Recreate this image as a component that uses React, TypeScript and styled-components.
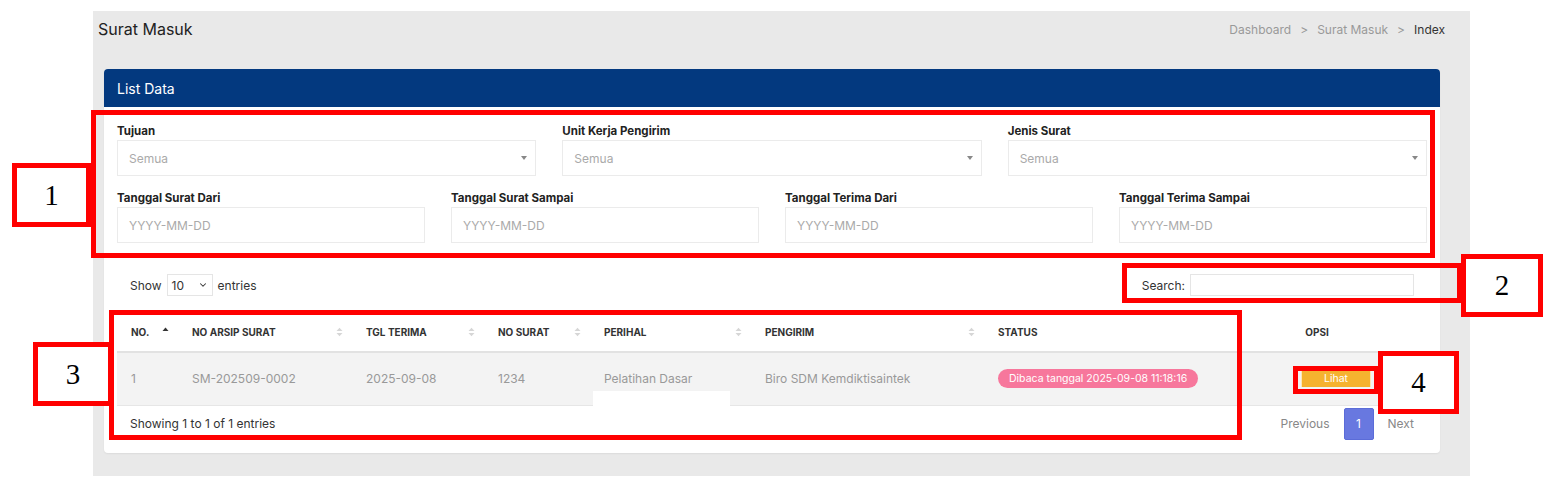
import styled, { createGlobalStyle } from 'styled-components';
import { ChevronDown } from 'lucide-react';

const GlobalStyle = createGlobalStyle`
  * { box-sizing: border-box; }
  body {
    margin: 0;
    background: #fff;
    font-family: Inter, "Noto Sans", sans-serif;
    color: #333;
  }
`;

const Page = styled.div`
  position: relative;
  width: 1553px;
  height: 479px;
  padding: 11px 0 0 93px;
  overflow: hidden;
`;

const Panel = styled.div`
  width: 1377px;
  height: 465px;
  background: #e9e9e9;
  padding: 0 30px 0 11px;
`;

const TopBar = styled.div`
  height: 36px;
  display: flex;
  align-items: center;
  justify-content: space-between;
  margin-left: -6px;
`;

const PageTitle = styled.h2`
  margin: 0;
  font-size: 16px;
  font-weight: 400;
  color: #222;
`;

const Crumbs = styled.div`
  display: flex;
  align-items: center;
  gap: 9px;
  font-size: 12px;
  color: #999;
  margin-right: -5px;
`;

const Crumb = styled.span<{ $active?: boolean }>`
  color: ${(p) => (p.$active ? '#333' : '#999')};
`;

const Card = styled.div`
  margin-top: 22px;
  background: #fff;
  border-radius: 4px;
  overflow: hidden;
  box-shadow: 0 1px 2px rgba(0, 0, 0, 0.06);
`;

const CardHeader = styled.div`
  height: 38px;
  background: #03397f;
  color: #fff;
  display: flex;
  align-items: center;
  padding-left: 13px;
  font-size: 14px;
`;

const CardBody = styled.div`
  padding: 16px 13px 13px;
`;

const FilterGrid = styled.div<{ $cols: number }>`
  display: grid;
  grid-template-columns: repeat(${(p) => p.$cols}, 1fr);
  column-gap: 26px;
  & + & { margin-top: 14px; }
`;

const Field = styled.div`
  display: flex;
  flex-direction: column;
`;

const Label = styled.label`
  font-size: 11.5px;
  font-weight: 700;
  color: #222;
  line-height: 17px;
`;

const Control = styled.div`
  height: 36px;
  border: 1px solid #ebebeb;
  display: flex;
  align-items: center;
  justify-content: space-between;
  padding: 0 8px 0 11px;
  font-size: 12px;
  color: #aaa;
`;

const Caret = styled.span`
  width: 0;
  height: 0;
  border-left: 3.5px solid transparent;
  border-right: 3.5px solid transparent;
  border-top: 4px solid #888;
`;

const Controls = styled.div`
  margin-top: 31px;
  padding: 0 13px;
  display: flex;
  justify-content: space-between;
  align-items: center;
  font-size: 12px;
  color: #333;
`;

const Inline = styled.div`
  display: flex;
  align-items: center;
  gap: 5px;
`;

const LengthSelect = styled.div`
  width: 46px;
  height: 22px;
  border: 1px solid #e5e5e5;
  display: flex;
  align-items: center;
  justify-content: space-between;
  padding: 0 4px;
  font-size: 12px;
`;

const SearchInput = styled.div`
  width: 224px;
  height: 22px;
  border: 1px solid #e5e5e5;
`;

const Table = styled.table`
  margin-top: 16px;
  width: 100%;
  border-collapse: collapse;
  table-layout: fixed;
`;

const Th = styled.th<{ $center?: boolean }>`
  height: 40px;
  padding: 0 0 0 14px;
  text-align: ${(p) => (p.$center ? 'center' : 'left')};
  font-size: 10px;
  font-weight: 700;
  color: #333;
  border-bottom: 2px solid #e2e2e2;
  position: relative;
`;

const SortIcon = styled.svg`
  position: absolute;
  right: 9px;
  top: 50%;
  transform: translateY(-50%);
`;

const Tr = styled.tr`
  background: #f3f3f3;
`;

const Td = styled.td<{ $pad?: number }>`
  height: 53px;
  padding: 0 0 0 ${(p) => p.$pad ?? 14}px;
  font-size: 12px;
  color: #999;
  border-bottom: 1px solid #e6e6e6;
  white-space: nowrap;
`;

const Badge = styled.span`
  display: inline-block;
  background: #f7779c;
  color: #fff;
  font-size: 10.5px;
  line-height: 19px;
  padding: 0 11px;
  border-radius: 10px;
`;

const ActionButton = styled.span`
  display: inline-block;
  width: 70px;
  height: 16px;
  line-height: 16px;
  text-align: center;
  background: #f5b22f;
  border-left: 1px solid #fde6b5;
  border-right: 1px solid #fde6b5;
  color: #fff;
  font-size: 10.5px;
`;

const Footer = styled.div`
  margin-top: 2px;
  height: 32px;
  padding: 0 13px;
  display: flex;
  align-items: center;
  justify-content: space-between;
  font-size: 12px;
  color: #333;
`;

const Pager = styled.div`
  display: flex;
  align-items: center;
  gap: 14px;
  color: #888;
`;

const PageBtn = styled.span`
  width: 30px;
  height: 32px;
  background: #6878e0;
  border: 1px solid #5b6cd8;
  border-radius: 2px;
  color: #fff;
  display: flex;
  align-items: center;
  justify-content: center;
`;

/* screenshot annotations, lying over the page */
const Mark = styled.div<{ $x: number; $y: number; $w: number; $h: number; $fill?: boolean }>`
  position: absolute;
  left: ${(p) => p.$x}px;
  top: ${(p) => p.$y}px;
  width: ${(p) => p.$w}px;
  height: ${(p) => p.$h}px;
  border: 5px solid #ff0000;
  background: ${(p) => (p.$fill ? '#fff' : 'transparent')};
  display: flex;
  align-items: center;
  justify-content: center;
  font-family: "Liberation Serif", "DejaVu Serif", serif;
  font-size: 29px;
  color: #000;
`;

const Patch = styled.div`
  position: absolute;
  left: 593px;
  top: 391px;
  width: 137px;
  height: 16px;
  background: #fff;
`;

const Sort = ({ asc }: { asc?: boolean }) => (
  <SortIcon width="7" height="10" viewBox="0 0 7 10">
    {asc ? (
      <path d="M0.5 4 L3.5 0.5 L6.5 4 Z" fill="#333" />
    ) : (
      <>
        <path d="M0.5 4 L3.5 0.8 L6.5 4 Z" fill="#d6d6d6" />
        <path d="M0.5 6 L3.5 9.2 L6.5 6 Z" fill="#d6d6d6" />
      </>
    )}
  </SortIcon>
);

const selects = ['Tujuan', 'Unit Kerja Pengirim', 'Jenis Surat'];
const dates = ['Tanggal Surat Dari', 'Tanggal Surat Sampai', 'Tanggal Terima Dari', 'Tanggal Terima Sampai'];

export default function App() {
  return (
    <Page>
      <GlobalStyle />
      <Panel>
        <TopBar>
          <PageTitle>Surat Masuk</PageTitle>
          <Crumbs>
            <Crumb>Dashboard</Crumb>
            <Crumb>&gt;</Crumb>
            <Crumb>Surat Masuk</Crumb>
            <Crumb>&gt;</Crumb>
            <Crumb $active>Index</Crumb>
          </Crumbs>
        </TopBar>

        <Card>
          <CardHeader>List Data</CardHeader>
          <CardBody>
            <FilterGrid $cols={3}>
              {selects.map((s) => (
                <Field key={s}>
                  <Label>{s}</Label>
                  <Control>
                    Semua
                    <Caret />
                  </Control>
                </Field>
              ))}
            </FilterGrid>
            <FilterGrid $cols={4}>
              {dates.map((d) => (
                <Field key={d}>
                  <Label>{d}</Label>
                  <Control>YYYY-MM-DD</Control>
                </Field>
              ))}
            </FilterGrid>

            <Controls>
              <Inline>
                Show
                <LengthSelect>
                  10
                  <ChevronDown size={10} strokeWidth={2.5} />
                </LengthSelect>
                entries
              </Inline>
              <Inline>
                Search:
                <SearchInput />
              </Inline>
            </Controls>

            <Table>
              <colgroup>
                <col style={{ width: 61 }} />
                <col style={{ width: 174 }} />
                <col style={{ width: 132 }} />
                <col style={{ width: 106 }} />
                <col style={{ width: 161 }} />
                <col style={{ width: 233 }} />
                <col style={{ width: 209 }} />
                <col />
              </colgroup>
              <thead>
                <tr>
                  <Th>NO.<Sort asc /></Th>
                  <Th>NO ARSIP SURAT<Sort /></Th>
                  <Th>TGL TERIMA<Sort /></Th>
                  <Th>NO SURAT<Sort /></Th>
                  <Th>PERIHAL<Sort /></Th>
                  <Th>PENGIRIM<Sort /></Th>
                  <Th>STATUS</Th>
                  <Th $center>OPSI</Th>
                </tr>
              </thead>
              <tbody>
                <Tr>
                  <Td>1</Td>
                  <Td>SM-202509-0002</Td>
                  <Td>2025-09-08</Td>
                  <Td>1234</Td>
                  <Td>Pelatihan Dasar</Td>
                  <Td>Biro SDM Kemdiktisaintek</Td>
                  <Td><Badge>Dibaca tanggal 2025-09-08 11:18:16</Badge></Td>
                  <Td $pad={108}><ActionButton>Lihat</ActionButton></Td>
                </Tr>
              </tbody>
            </Table>

            <Footer>
              <span>Showing 1 to 1 of 1 entries</span>
              <Pager>
                <span>Previous</span>
                <PageBtn>1</PageBtn>
                <span>Next</span>
              </Pager>
            </Footer>
          </CardBody>
        </Card>
      </Panel>

      <Patch />
      <Mark $x={91} $y={110} $w={1344} $h={148} />
      <Mark $x={12} $y={163} $w={79} $h={64} $fill>1</Mark>
      <Mark $x={1122} $y={263} $w={340} $h={40} />
      <Mark $x={1461} $y={254} $w={82} $h={63} $fill>2</Mark>
      <Mark $x={109} $y={310} $w={1133} $h={130} />
      <Mark $x={33} $y={342} $w={80} $h={64} $fill>3</Mark>
      <Mark $x={1293} $y={366} $w={86} $h={28} />
      <Mark $x={1378} $y={351} $w={81} $h={63} $fill>4</Mark>
    </Page>
  );
}
